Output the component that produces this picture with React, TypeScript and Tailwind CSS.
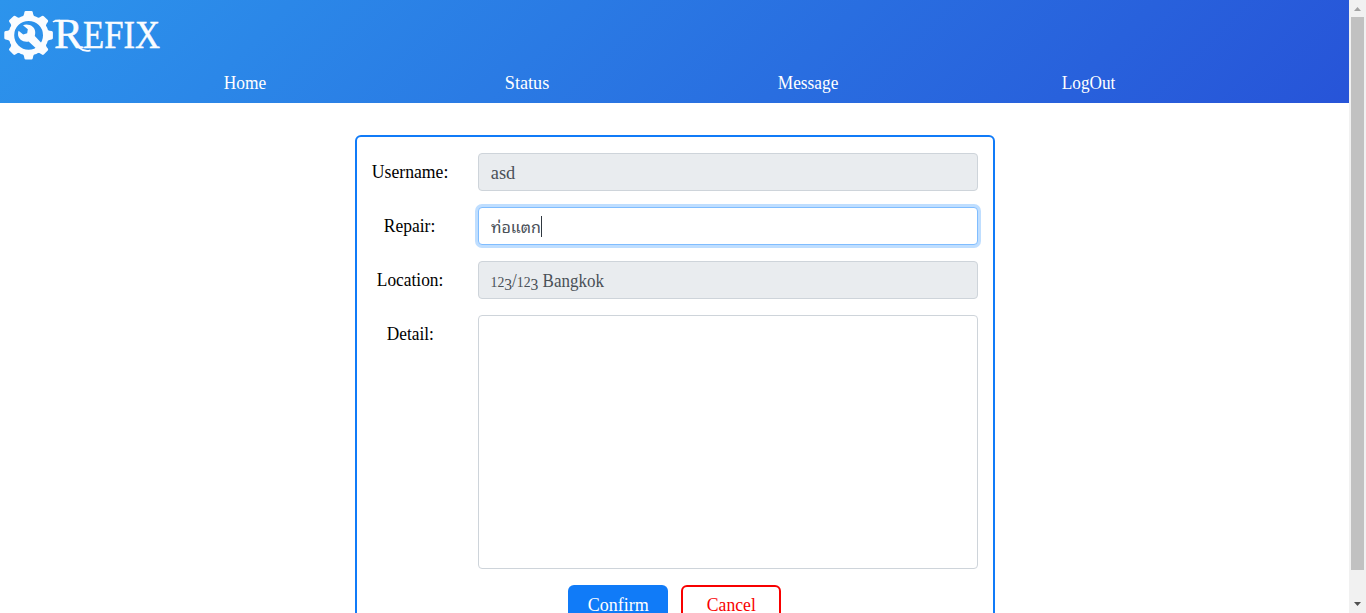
import React from "react";

const navItems = [
  { label: "Home", width: 42.5 },
  { label: "Status", width: 44.5 },
  { label: "Message", width: 60.5 },
  { label: "LogOut", width: 53.5 },
];

function Label({ text, width }: { text: string; width: number }) {
  return (
    <svg width={width} height="24" className="inline-block overflow-visible align-top" fill="currentColor">
      <text x="-0.2" y="17.5" textLength={width} lengthAdjust="spacingAndGlyphs" fontSize="18.5">
        {text}
      </text>
    </svg>
  );
}

function Logo() {
  const teeth = [0, 45, 90, 135, 180, 225, 270, 315];
  return (
    <svg width="170" height="70" viewBox="0 0 170 70" className="block" fill="#fafcff">
      <circle cx="28.6" cy="35.3" r="17.2" fill="none" stroke="#fafcff" strokeWidth="5.6" />
      {teeth.map((a) => (
        <path
          key={a}
          d="M20.5 18.6 Q24 17 24.4 12.3 Q24.6 11 25.8 11 H31.4 Q32.6 11 32.8 12.3 Q33.2 17 36.7 18.6 Z"
          transform={`rotate(${a} 28.6 35.3)`}
        />
      ))}
      <path d="M23 25.2 C28 23.2 35 26 35.2 32 C35.3 33.8 35 34.8 34.8 36 L41.6 43.2 L36.2 48.5 L28.6 41.5 C24 42.7 18 39.7 18 34 C18 32.8 18.2 31.8 18.6 30.7 L23.2 34.5 L27.2 33.3 L27.8 29.2 Z" />
      <g fontFamily="'Liberation Serif', serif" stroke="#fafcff" strokeWidth="0.5">
        <text x="54" y="48" fontSize="43" textLength="29" lengthAdjust="spacingAndGlyphs">R</text>
        <text x="83" y="48" fontSize="39" textLength="77" lengthAdjust="spacingAndGlyphs">EFIX</text>
      </g>
      <path
        d="M53.2 22.2 Q54 20.6 60 20.7 M71.5 38 C76 46 82 53 90.5 50.3"
        fill="none"
        stroke="#fafcff"
        strokeWidth="1.8"
      />
    </svg>
  );
}

function Field({ label, width, children }: { label: string; width: number; children: React.ReactNode }) {
  return (
    <div className="mb-4 flex">
      <div className="w-[106px] shrink-0 pt-[7px] text-center text-black">
        <Label text={label} width={width} />
      </div>
      <div className="ml-[15px] w-[500px]">{children}</div>
    </div>
  );
}

export default function App() {
  return (
    <div className="flex h-[613px] w-[1366px] overflow-hidden bg-white font-['Liberation_Serif','Noto_Sans_Thai',serif] text-[17.5px] leading-6">
      <div className="h-full w-[1349px] overflow-hidden">
        <header className="h-[103px] bg-[linear-gradient(135deg,#2c94ec_0%,#2754d8_100%)]">
          <Logo />
          <nav className="flex pl-[105px] pt-px text-white">
            {navItems.map((item) => (
              <a key={item.label} className="w-[281.2px] shrink-0 text-center">
                <Label text={item.label} width={item.width} />
              </a>
            ))}
          </nav>
        </header>
        <main className="ml-[355px] mt-8 h-[530px] w-[640px] rounded-[6px] border-2 border-[#107bf8] pt-4">
          <Field label="Username:" width={76.5}>
            <div className="h-[38px] rounded-[4px] border border-[#ced4da] bg-[#e9ecef] py-[7px] pl-3 text-[#495057]">
              <Label text="asd" width={24.5} />
            </div>
          </Field>
          <Field label="Repair:" width={51.5}>
            <div className="flex h-[38px] items-center rounded-[4px] border border-[#80bdff] bg-white pl-3 text-[#495057] shadow-[0_0_0_3px_#bfdeff]">
              <svg width="50" height="24" className="overflow-visible font-[Tahoma,'Noto_Sans_Thai_Looped',Loma,Garuda,'Noto_Sans_Thai',sans-serif]" fill="currentColor">
                <text x="0" y="18.5" textLength="50" lengthAdjust="spacingAndGlyphs" fontSize="16">ท่อแตก</text>
              </svg>
              <span className="h-[21px] w-px bg-[#303840]" />
            </div>
          </Field>
          <Field label="Location:" width={66.5}>
            <div className="h-[38px] rounded-[4px] border border-[#ced4da] bg-[#e9ecef] py-[7px] pl-3 text-[#495057]">
              <svg width="114" height="24" className="overflow-visible" fill="currentColor">
                <text x="-0.5" y="17.5" textLength="113.5" lengthAdjust="spacingAndGlyphs" fontSize="18.5">
                  <tspan fontSize="15">12</tspan>
                  <tspan fontSize="17" dy="3">3</tspan>
                  <tspan dy="-3">/</tspan>
                  <tspan fontSize="15">12</tspan>
                  <tspan fontSize="17" dy="3">3</tspan>
                  <tspan dy="-3"> Bangkok</tspan>
                </text>
              </svg>
            </div>
          </Field>
          <Field label="Detail:" width={47}>
            <div className="h-[254px] rounded-[4px] border border-[#ced4da] bg-white" />
          </Field>
          <div className="ml-[211px] flex gap-[13px]">
            <button className="flex h-10 w-[100px] justify-center rounded-[6px] bg-[#107bf8] pt-2 text-white">
              <Label text="Confirm" width={61} />
            </button>
            <button className="flex h-10 w-[100px] justify-center rounded-[6px] border-2 border-[#f80000] pt-1.5 text-[#f80000]">
              <Label text="Cancel" width={49} />
            </button>
          </div>
        </main>
      </div>
      <aside className="flex h-full w-[17px] flex-col items-center bg-[#f1f1f1]">
        <svg width="17" height="17" className="block shrink-0">
          <path d="M5 11h7L8.5 7z" fill="#a3a3a3" />
        </svg>
        <div className="h-[553px] w-[13px] bg-[#c1c1c1]" />
        <svg width="17" height="17" className="mt-auto block shrink-0">
          <path d="M5 6h7l-3.5 4z" fill="#505050" />
        </svg>
      </aside>
    </div>
  );
}
